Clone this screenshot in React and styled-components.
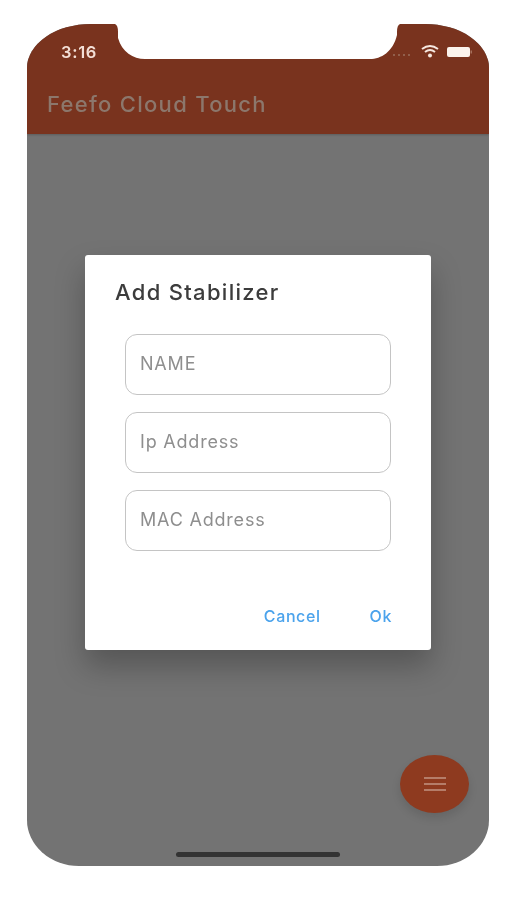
import styled, { createGlobalStyle } from "styled-components";

const GlobalStyle = createGlobalStyle`
  html, body {
    margin: 0;
    padding: 0;
    background: #fff;
  }
  body {
    font-family: Inter, "Liberation Sans", sans-serif;
  }
`;

const Page = styled.div`
  width: 507px;
  height: 900px;
  padding: 24px 18px 34px 27px;
  box-sizing: border-box;
  overflow: hidden;
`;

const Phone = styled.div`
  position: relative;
  width: 462px;
  height: 842px;
  border-radius: 64px 64px 52px 52px / 44px 44px 46px 46px;
  overflow: hidden;
  background: #737373;
  display: flex;
  flex-direction: column;
  filter: blur(0.5px);
`;

const Header = styled.header`
  height: 110px;
  background: #79331e;
  box-shadow: 0 1px 2px rgba(0, 0, 0, 0.2);
  display: flex;
  flex-direction: column;
  box-sizing: border-box;
  flex-shrink: 0;
`;

const StatusBar = styled.div`
  display: flex;
  align-items: center;
  height: 24px;
  margin-top: 16px;
  padding: 0 17px 0 34px;
`;

const Time = styled.span`
  font-size: 16.5px;
  font-weight: 600;
  color: #f3dfd6;
  letter-spacing: 0.7px;
`;

const StatusIcons = styled.div`
  margin-left: auto;
  display: flex;
  align-items: center;
`;

const Title = styled.h1`
  margin: 26px 0 0 20px;
  font-size: 22px;
  line-height: 28px;
  font-weight: 500;
  letter-spacing: 1.3px;
  color: #8c776c;
`;

const Notch = styled.svg`
  position: absolute;
  top: 0;
  left: 88px;
  display: block;
`;

const Scrim = styled.div`
  position: absolute;
  inset: 0;
  padding-top: 15px;
  box-sizing: border-box;
  display: flex;
  align-items: center;
  justify-content: center;
`;

const Dialog = styled.div`
  width: 346px;
  height: 395px;
  box-sizing: border-box;
  padding: 24px 39px 0 30px;
  background: #fff;
  border-radius: 3px;
  box-shadow: 0 16px 30px rgba(0, 0, 0, 0.26);
  display: flex;
  flex-direction: column;
`;

const DialogTitle = styled.h2`
  margin: 0;
  font-size: 22px;
  line-height: 27px;
  font-weight: 500;
  letter-spacing: 1.3px;
  color: #3c3c3c;
`;

const Fields = styled.div`
  display: flex;
  flex-direction: column;
  gap: 17px;
  margin: 28px 0 0 10px;
`;

const Field = styled.div`
  width: 266px;
  height: 61px;
  box-sizing: border-box;
  padding: 0 14px 3px;
  border: 1.5px solid #c4c4c4;
  border-radius: 12px;
  display: flex;
  align-items: center;
  font-size: 18px;
  letter-spacing: 0.8px;
  color: #8e8e8e;
`;

const Actions = styled.div`
  display: flex;
  justify-content: flex-end;
  gap: 49px;
  margin-top: 55px;
`;

const Action = styled.button`
  border: 0;
  padding: 0;
  background: none;
  font-family: inherit;
  font-size: 16px;
  line-height: 20px;
  font-weight: 500;
  letter-spacing: 0.6px;
  color: #4ba3ec;
`;

const Fab = styled.button`
  position: absolute;
  left: 373px;
  top: 731px;
  width: 69px;
  height: 58px;
  padding: 0;
  border: 0;
  border-radius: 50%;
  background: #8e3a1f;
  box-shadow: 0 5px 10px rgba(0, 0, 0, 0.12);
  display: flex;
  flex-direction: column;
  align-items: center;
  justify-content: center;
  gap: 4px;
`;

const FabLine = styled.span`
  width: 22px;
  height: 2px;
  background: #b57d69;
`;

const HomeBar = styled.div`
  position: absolute;
  left: 149px;
  bottom: 9px;
  width: 164px;
  height: 5px;
  border-radius: 3px;
  background: #333;
`;

function App() {
  return (
    <Page>
      <GlobalStyle />
      <Phone>
        <Header>
          <StatusBar>
            <Time>3:16</Time>
            <StatusIcons>
              <svg width="80" height="16" viewBox="0 0 80 16">
                <g fill="#9a6f5d">
                  <circle cx="2" cy="11" r="1" />
                  <circle cx="7" cy="11" r="1" />
                  <circle cx="12" cy="11" r="1" />
                  <circle cx="17" cy="11" r="1" />
                </g>
                <g fill="none" stroke="#f6e8e0" strokeWidth="2">
                  <path d="M30 5 Q38 -1 46 5" />
                  <path d="M33 8 Q38 4 43 8" />
                </g>
                <circle cx="38" cy="11.5" r="2" fill="#f6e8e0" />
                <rect x="55" y="3" width="23" height="10" rx="2" fill="#fbf3ec" />
                <rect x="78.5" y="6.5" width="1.5" height="3" fill="#a5705c" />
              </svg>
            </StatusIcons>
          </StatusBar>
          <Title>Feefo Cloud Touch</Title>
        </Header>
        <Notch width="285" height="36" viewBox="0 0 285 36">
          <path
            d="M0 0 H285 Q282 1 282 8 V11 C278 28 266 35 255 35 H30 C18 35 7 28 3 14 V8 Q3 1 0 0 Z"
            fill="#fff"
          />
        </Notch>
        <Scrim>
          <Dialog>
            <DialogTitle>Add Stabilizer</DialogTitle>
            <Fields>
              <Field>NAME</Field>
              <Field>Ip Address</Field>
              <Field>MAC Address</Field>
            </Fields>
            <Actions>
              <Action>Cancel</Action>
              <Action>Ok</Action>
            </Actions>
          </Dialog>
        </Scrim>
        <Fab>
          <FabLine />
          <FabLine />
          <FabLine />
        </Fab>
        <HomeBar />
      </Phone>
    </Page>
  );
}

export default App;
